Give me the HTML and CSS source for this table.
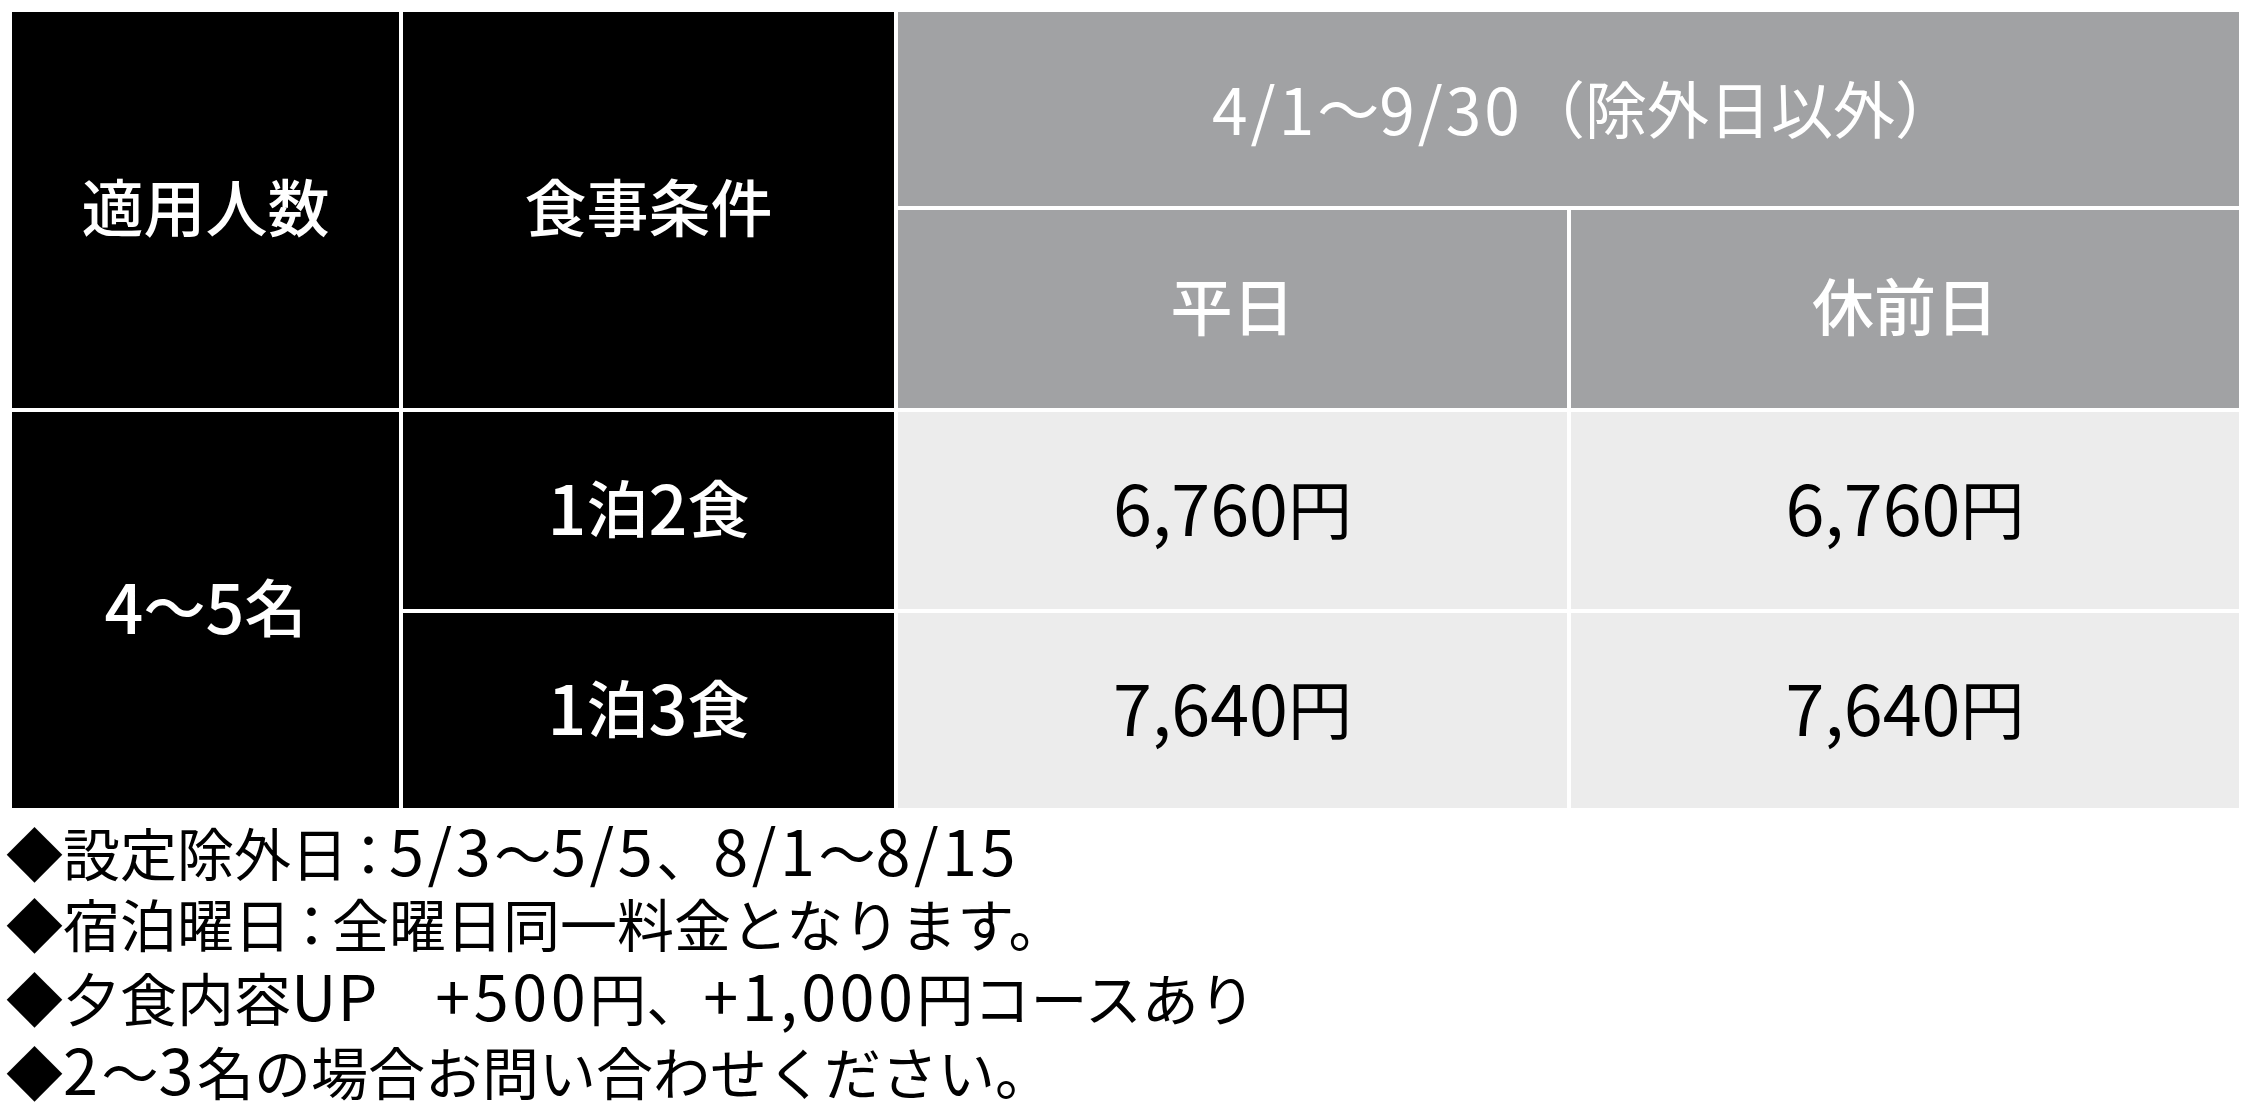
FILE: index.html
```html
<!DOCTYPE html>
<html lang="ja">
<head>
<meta charset="utf-8">
<title>料金表</title>
<link rel="stylesheet" href="styles.css">
</head>
<body>
<div class="page">
  <div class="price-table">
    <div class="cell dark span-rows">適用人数</div>
    <div class="cell dark span-rows">食事条件</div>
    <div class="cell gray span-cols period"><span class="num">4/1</span>〜<span class="num">9/30</span>（除外日以外<span class="paren-close">）</span></div>
    <div class="cell gray">平日</div>
    <div class="cell gray">休前日</div>
    <div class="cell dark span-rows"><span class="num">4</span>〜<span class="num">5</span>名</div>
    <div class="cell dark"><span class="num">1</span>泊<span class="num">2</span>食</div>
    <div class="cell light"><span class="num">6,760</span>円</div>
    <div class="cell light"><span class="num">6,760</span>円</div>
    <div class="cell dark"><span class="num">1</span>泊<span class="num">3</span>食</div>
    <div class="cell light"><span class="num">7,640</span>円</div>
    <div class="cell light"><span class="num">7,640</span>円</div>
  </div>
  <ul class="notes">
    <li>◆設定除外日<span class="colon">：</span><span class="num">5/3</span>〜<span class="num">5/5</span>、<span class="num">8/1</span>〜<span class="num">8/15</span></li>
    <li>◆宿泊曜日<span class="colon">：</span>全曜日同一料金となります。</li>
    <li>◆夕食内容<span class="latin">UP</span>　<span class="num">+500</span>円、<span class="num">+1,000</span>円コースあり</li>
    <li>◆<span class="num">2</span>〜<span class="num">3</span>名の場合お問い合わせください。</li>
  </ul>
</div>
</body>
</html>
```

FILE: styles.css
```css
html, body {
  margin: 0;
  padding: 0;
  background: #ffffff;
}

.page {
  padding: 12px 11px 0 12px;
  font-family: "Noto Sans CJK JP", "Noto Sans", sans-serif;
}

.price-table {
  display: grid;
  grid-template-columns: 387px 491px 669px 668px;
  grid-template-rows: 194px 198px 197px 195px;
  gap: 4px;
  background: #ffffff;
}

.cell {
  display: flex;
  align-items: center;
  justify-content: center;
  padding-bottom: 10px;
  font-size: 62px;
  font-weight: 500;
  line-height: 72px;
  white-space: nowrap;
}

.cell .num {
  font-size: 1.1em;
}

.span-rows {
  grid-row: span 2;
}

.span-cols {
  grid-column: span 2;
}

.dark {
  background: #000000;
  color: #ffffff;
}

.gray {
  background: #a1a2a4;
  color: #ffffff;
}

.period {
  font-weight: 400;
  padding-bottom: 4px;
}

.period .num {
  font-size: 64px;
  letter-spacing: 3px;
}

.period .paren-close {
  margin-right: -32px;
}

.light {
  background: #ececec;
  color: #000000;
  font-weight: 400;
  font-size: 64px;
}

.light .num {
  font-size: 70px;
}

.notes {
  list-style: none;
  margin: 5px 0 0 -6px;
  padding: 0;
  font-size: 57px;
  line-height: 71px;
  font-weight: 400;
  color: #000000;
}

.notes li {
  margin: 0;
  white-space: nowrap;
}

.notes .num {
  font-size: 63px;
  letter-spacing: 3.5px;
}

.notes .latin {
  font-size: 63px;
  letter-spacing: 1px;
}

.notes .colon {
  margin-left: -8px;
  letter-spacing: -8px;
}
```
